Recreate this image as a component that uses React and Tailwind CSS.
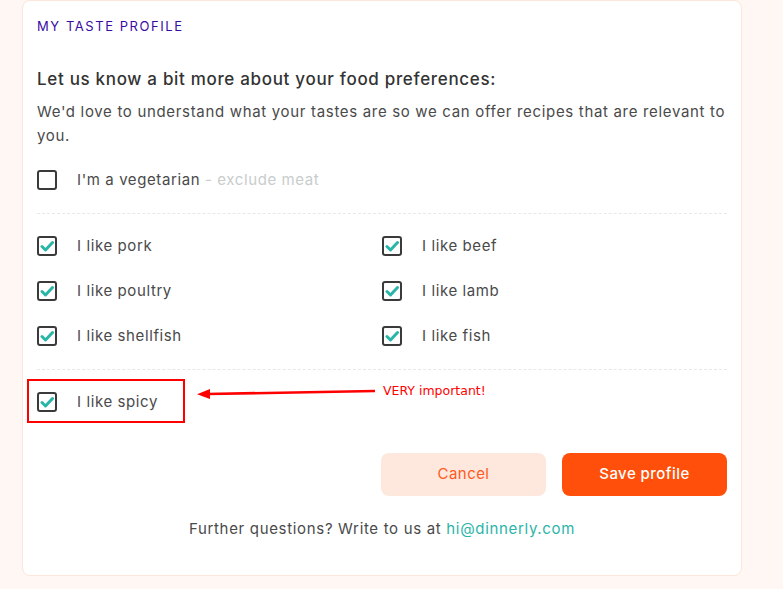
import React from "react";

const Check = ({ checked }) => (
  <span className="flex h-[20px] w-[20px] shrink-0 items-center justify-center rounded-[3px] border-2 border-[#3a3a3a] bg-white">
    {checked && (
      <svg width="14" height="12" viewBox="0 0 14 12">
        <path d="M2 6.5 L5.5 10 L12.5 2.5" fill="none" stroke="#2bb5a8" strokeWidth="3" strokeLinecap="round" strokeLinejoin="round" />
      </svg>
    )}
  </span>
);

const Row = ({ checked = true, children }) => (
  <label className="flex h-[20px] items-center gap-[20px] text-[15px] tracking-[0.04em] text-[#4a4a4a]">
    <Check checked={checked} />
    <span className="leading-[20px]">{children}</span>
  </label>
);

const meats = ["pork", "beef", "poultry", "lamb", "shellfish", "fish"];

export default function App() {
  return (
    <div
      className="relative min-h-[589px] w-full bg-[#fef7f4] pl-[22px] pr-[41px]"
      style={{ fontFamily: "Inter, 'Noto Sans', sans-serif" }}
    >
      {/* CARD */}
      <div className="rounded-[8px] border border-[#fde6db] bg-white px-[14px] pt-[15px] pb-[34px]">
        <h3 className="text-[13px] leading-[20px] tracking-[0.12em] text-[#3a0ca3]">MY TASTE PROFILE</h3>

        <h2 className="mt-[31px] text-[17px] font-medium leading-[24px] tracking-[0.04em] text-[#333]">
          Let us know a bit more about your food preferences:
        </h2>
        <p className="mt-[9px] text-[15px] leading-[24px] tracking-[0.045em] text-[#4a4a4a]">
          We'd love to understand what your tastes are so we can offer recipes that are relevant to you.
        </p>

        <div className="mt-[22px]">
          <Row checked={false}>
            I'm a vegetarian <span className="text-[#c8cdcc]">- exclude meat</span>
          </Row>
        </div>

        <div className="mt-[23px] border-t border-dashed border-[#e8e8e8]" />

        {/* MEAT GRID */}
        <div className="mt-[22px] grid grid-cols-2 gap-y-[25px]">
          {meats.map((m) => (
            <Row key={m}>I like {m}</Row>
          ))}
        </div>

        <div className="mt-[23px] border-t border-dashed border-[#e8e8e8]" />

        <div className="mt-[22px]">
          <Row>I like spicy</Row>
        </div>

        {/* BUTTONS */}
        <div className="mt-[41px] flex justify-end gap-[16px]">
          <button className="h-[43px] w-[165px] rounded-[8px] bg-[#fee7dd] text-[15px] tracking-[0.03em] text-[#ff5a1f]">Cancel</button>
          <button className="h-[43px] w-[165px] rounded-[8px] bg-[#ff4f0a] text-[15px] font-medium tracking-[0.03em] text-white">Save profile</button>
        </div>

        <p className="mt-[21px] text-center text-[15px] leading-[24px] tracking-[0.045em] text-[#4a4a4a]">
          Further questions? Write to us at <span className="text-[#2bb5a8]">hi@dinnerly.com</span>
        </p>
      </div>

      {/* ANNOTATIONS */}
      <div className="absolute left-[27px] top-[379px] h-[44px] w-[158px] border-2 border-[#ff0000]" />
      <svg className="absolute left-[195px] top-[385px]" width="185" height="16" viewBox="0 0 185 16">
        <line x1="12" y1="9" x2="180" y2="6" stroke="#ff0000" strokeWidth="2.5" />
        <path d="M2 9.2 L15 4 L15 14 Z" fill="#ff0000" />
      </svg>
      <span
        className="absolute left-[383px] top-[383px] text-[12.5px] leading-[16px] text-[#ff0000]"
        style={{ fontFamily: "'DejaVu Sans', sans-serif" }}
      >
        VERY important!
      </span>
    </div>
  );
}
